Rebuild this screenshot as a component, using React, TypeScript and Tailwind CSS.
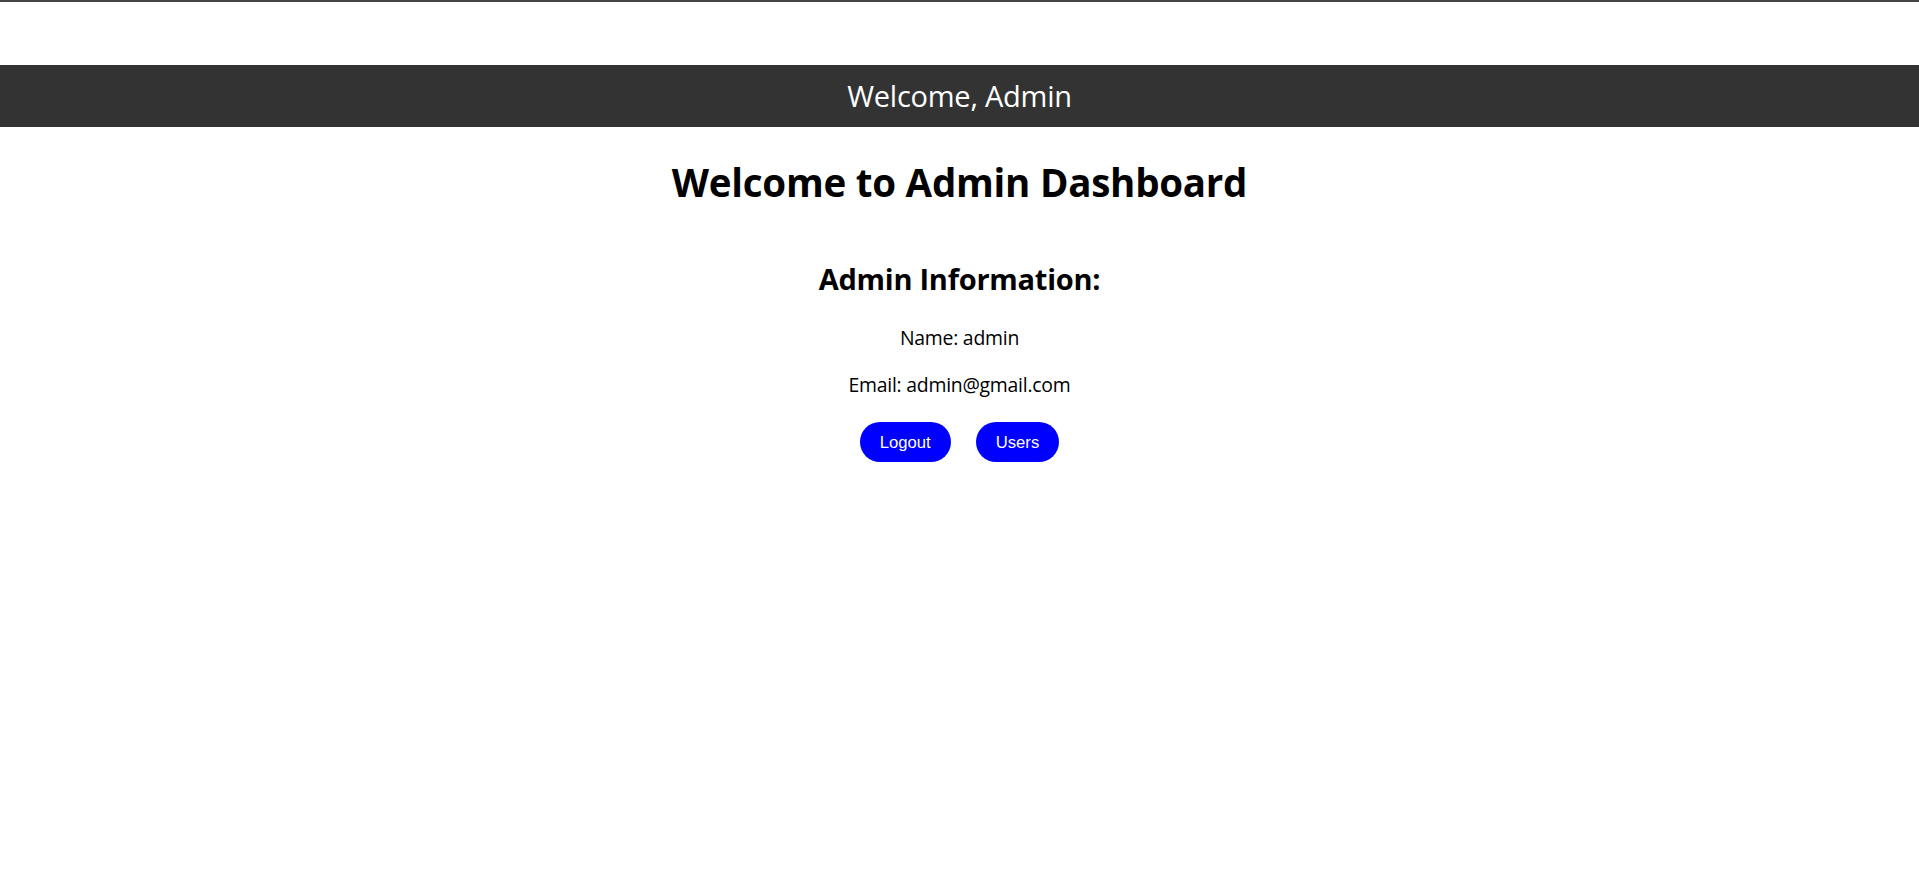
import React from "react";

export default function App() {
  const font = { fontFamily: '"Open Sans", "Noto Sans", sans-serif' };
  return (
    <div className="min-h-[883px] w-full bg-white text-black tracking-[-0.015em]" style={font}>
      <div className="h-[2px] w-full bg-[#444444]" />
      <header className="mt-[63px] flex h-[62px] items-center justify-center bg-[#333333]">
        <span className="text-[29px] leading-[36px] font-normal text-white">Welcome, Admin</span>
      </header>
      <main className="flex flex-col items-center">
        <h1 className="mt-[31px] text-[38.5px] leading-[48px] font-bold">Welcome to Admin Dashboard</h1>
        <h2 className="mt-[55px] text-[29px] leading-[36px] font-bold">Admin Information:</h2>
        <p className="mt-[29px] text-[19.4px] leading-[24px]">Name: admin</p>
        <p className="mt-[23px] text-[19.4px] leading-[24px]">Email: admin@gmail.com</p>
        <div className="mt-[25px] flex gap-[25px] tracking-normal">
          <button
            className="flex h-[40px] items-center rounded-[20px] bg-[#0000ff] px-[20px] text-[16.67px] text-white"
            style={{ fontFamily: '"Liberation Sans", Arial, sans-serif' }}
          >
            Logout
          </button>
          <button
            className="flex h-[40px] items-center rounded-[20px] bg-[#0000ff] px-[20px] text-[16.67px] text-white"
            style={{ fontFamily: '"Liberation Sans", Arial, sans-serif' }}
          >
            Users
          </button>
        </div>
      </main>
    </div>
  );
}
